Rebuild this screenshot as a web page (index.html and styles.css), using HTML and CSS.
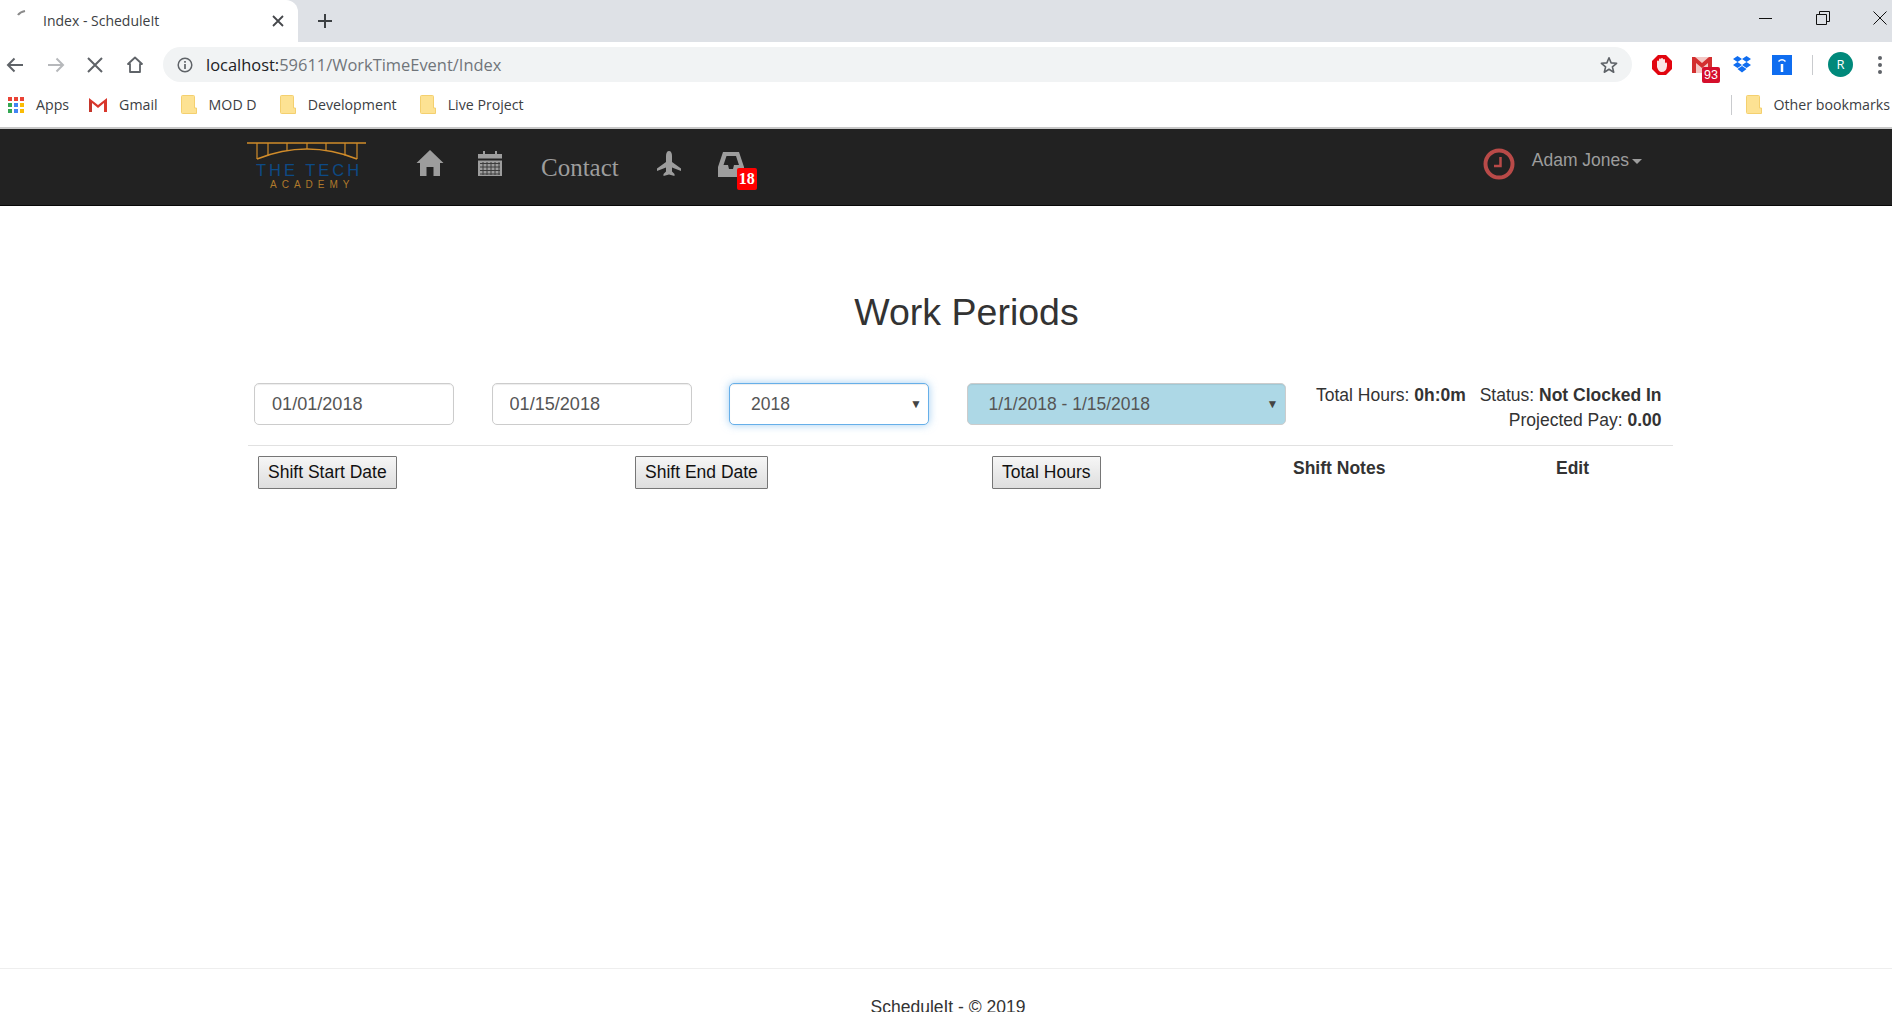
FILE: index.html
```html
<!DOCTYPE html>
<html lang="en">
<head>
<meta charset="utf-8">
<title>Index - ScheduleIt</title>
<link rel="stylesheet" href="styles.css">
</head>
<body>
<div class="tabstrip">
  <div class="tab">
    <svg class="spinner" width="12" height="8" viewBox="0 0 12 8"><path d="M2 6Q4 3 9 2" fill="none" stroke="#8a8a8a" stroke-width="2.2"/></svg>
    <span class="tab-title">Index - ScheduleIt</span>
    <svg class="tab-close" width="12" height="12" viewBox="0 0 12 12"><path d="M1 1L11 11M11 1L1 11" stroke="#45474b" stroke-width="1.8"/></svg>
  </div>
  <svg class="newtab" width="16" height="16" viewBox="0 0 16 16"><path d="M8 1V15M1 8H15" stroke="#3c4043" stroke-width="2"/></svg>
  <div class="winctl">
    <svg width="14" height="14" viewBox="0 0 14 14"><path d="M0 7.5H13" stroke="#111" stroke-width="1"/></svg>
    <svg width="14" height="14" viewBox="0 0 14 14"><path d="M.5 3.5H10.5V13.5H.5ZM3.5 3V.5H13.500V10.500H11" fill="none" stroke="#111" stroke-width="1"/></svg>
    <svg width="14" height="14" viewBox="0 0 14 14"><path d="M.5 .5L13.500 13.500M13.500 .5L.5 13.500" stroke="#111" stroke-width="1"/></svg>
  </div>
</div>
<div class="toolbar">
  <svg class="tb-back" width="18" height="16" viewBox="0 0 18 16"><path d="M17 8H2M8.500 1.500L2 8L8.500 14.500" fill="none" stroke="#5f6368" stroke-width="2"/></svg>
  <svg class="tb-fwd" width="18" height="16" viewBox="0 0 18 16"><path d="M1 8H16M9.500 1.500L16 8L9.500 14.500" fill="none" stroke="#b6b8bb" stroke-width="2"/></svg>
  <svg class="tb-stop" width="16" height="16" viewBox="0 0 16 16"><path d="M1 1L15 15M15 1L1 15" stroke="#5f6368" stroke-width="2"/></svg>
  <svg class="tb-home" width="16" height="17" viewBox="0 0 16 17"><path d="M8 1.500L15 8H13V16H3V8H1Z" fill="none" stroke="#5f6368" stroke-width="1.800" stroke-linejoin="round"/></svg>
  <div class="omnibox">
    <svg class="omni-info" width="16" height="16" viewBox="0 0 16 16"><circle cx="8" cy="8" r="6.800" fill="none" stroke="#5f6368" stroke-width="1.500"/><path d="M8 7V12M8 4V5.800" stroke="#5f6368" stroke-width="1.700"/></svg>
    <span class="url"><span class="url-host">localhost:</span>59611/WorkTimeEvent/Index</span>
    <svg class="omni-star" width="18" height="18" viewBox="0 0 18 18"><path d="M9 1.800L11.100 6.900L16.600 7.300L12.400 10.900L13.700 16.200L9 13.300L4.300 16.200L5.600 10.900L1.400 7.300L6.900 6.900Z" fill="none" stroke="#5f6368" stroke-width="1.600" stroke-linejoin="round"/></svg>
  </div>
  <div class="extensions">
    <svg width="20" height="20" viewBox="0 0 20 20"><path d="M6 0H14L20 6V14L14 20H6L0 14V6Z" fill="#e2050f"/><path d="M5 9.500V6.500A1 1 0 0 1 7 6.500V4.500A1 1 0 0 1 9 4.500V4A1 1 0 0 1 11 4V5A1 1 0 0 1 13 5V8.500A1 1 0 0 1 15 8.500V11Q14.500 17 9.500 17Q6.500 17 5 12Z" fill="#fbe4e4"/></svg>
    <div class="ext-gmail">
      <svg width="20" height="16" viewBox="0 0 20 16"><path d="M0 0H20V16H0Z" fill="#f3c9c6"/><path d="M0 0H3L10 6L17 0H20V16H16V6L10 11L4 6V16H0Z" fill="#d32f2f"/></svg>
      <span class="ext-badge">93</span>
    </div>
    <svg class="ext-dropbox" width="18" height="17" viewBox="0 0 18 17"><path d="M4.500 0L9 3L4.500 6L0 3ZM13.500 0L18 3L13.500 6L9 3ZM0 9L4.500 6L9 9L4.500 12ZM18 9L13.500 6L9 9L13.500 12ZM4.500 13L9 10L13.500 13L9 16.500Z" fill="#0f6df0"/></svg>
    <div class="ext-info"><svg width="20" height="20" viewBox="0 0 20 20"><path d="M6.500 6.500Q10 3 13.500 6.500" fill="none" stroke="#fff" stroke-width="1.500"/><path d="M10 9V17" stroke="#fff" stroke-width="2.500"/></svg></div>
    <span class="ext-divider"></span>
    <span class="avatar">R</span>
    <svg class="menu-dots" width="4" height="18" viewBox="0 0 4 18"><circle cx="2" cy="2" r="2" fill="#5f6368"/><circle cx="2" cy="9" r="2" fill="#5f6368"/><circle cx="2" cy="16" r="2" fill="#5f6368"/></svg>
  </div>
</div>
<div class="bookmarks">
  <svg class="bm-apps" width="16" height="16" viewBox="0 0 16 16"><g><rect width="4" height="4" fill="#ea4335"/><rect x="6" width="4" height="4" fill="#ea4335"/><rect x="12" width="4" height="4" fill="#ea4335"/><rect y="6" width="4" height="4" fill="#34a853"/><rect x="6" y="6" width="4" height="4" fill="#4285f4"/><rect x="12" y="6" width="4" height="4" fill="#fbbc05"/><rect y="12" width="4" height="4" fill="#34a853"/><rect x="6" y="12" width="4" height="4" fill="#4285f4"/><rect x="12" y="12" width="4" height="4" fill="#fbbc05"/></g></svg>
  <span class="bm-label bm-first">Apps</span>
  <svg class="bm-gmail" width="18" height="14" viewBox="0 0 18 14"><path d="M0 0L9 7L18 0V14H15V5L9 10L3 5V14H0Z" fill="#d9372c"/><path d="M3 5V14H0V2Z" fill="#c4362b"/></svg>
  <span class="bm-label">Gmail</span>
  <svg class="bm-folder" width="16" height="19" viewBox="0 0 16 19"><path class="folder-shape" d="M1.500 .5H12.500Q13.500 .5 13.500 1.500V13H15.500V18.500H1.500Q.5 18.500 .5 17.500V1.500Q.5 .5 1.500 .5Z"/></svg>
  <span class="bm-label">MOD D</span>
  <svg class="bm-folder" width="16" height="19" viewBox="0 0 16 19"><path class="folder-shape" d="M1.500 .5H12.500Q13.500 .5 13.500 1.500V13H15.500V18.500H1.500Q.5 18.500 .5 17.500V1.500Q.5 .5 1.500 .5Z"/></svg>
  <span class="bm-label">Development</span>
  <svg class="bm-folder" width="16" height="19" viewBox="0 0 16 19"><path class="folder-shape" d="M1.500 .5H12.500Q13.500 .5 13.500 1.500V13H15.500V18.500H1.500Q.5 18.500 .5 17.500V1.500Q.5 .5 1.500 .5Z"/></svg>
  <span class="bm-label">Live Project</span>
  <span class="bm-divider"></span>
  <svg class="bm-folder bm-other" width="16" height="19" viewBox="0 0 16 19"><path class="folder-shape" d="M1.500 .5H12.500Q13.500 .5 13.500 1.500V13H15.500V18.500H1.500Q.5 18.500 .5 17.500V1.500Q.5 .5 1.500 .5Z"/></svg>
  <span class="bm-label">Other bookmarks</span>
</div>
<nav class="navbar">
  <svg class="logo" width="120" height="46" viewBox="0 0 120 46">
    <g fill="none" stroke="#d18c2a">
      <path d="M0 1H119" stroke-width="1.500"/>
      <path d="M10 1V17M21 1V13.500M40 1V9M60 1V7M79 1V9M98 1V13.500M110 1V17" stroke-width="1.200"/>
      <path d="M10 17Q60 -3 110 17" stroke-width="1.500"/>
    </g>
    <text class="logo-main" x="9" y="33.500">THE TECH</text>
    <text class="logo-sub" x="23" y="45.500">ACADEMY</text>
  </svg>
  <a class="nav-icon nav-home" href="#"><svg width="28" height="26" viewBox="0 0 28 26"><path d="M14 0L27.500 13H24V26H17.500V17H10.500V26H4V13H.5Z" fill="#9d9d9d"/></svg></a>
  <a class="nav-icon nav-cal" href="#"><svg width="24" height="25" viewBox="0 0 24 25"><path d="M5 0H7V3H17V0H19V3H24V7.500H0V3H5Z" fill="#9d9d9d"/><path d="M0 9.500H24V25H0Z" fill="#9d9d9d"/><path d="M2 12.500H22M2 16H22M2 19.500H22M2 23H22M5 11V24M9 11V24M13 11V24M17 11V24M21 11V24" stroke="#3d3d3d" stroke-width="1"/></svg></a>
  <a class="nav-contact" href="#">Contact</a>
  <a class="nav-icon nav-plane" href="#"><svg width="24" height="25" viewBox="0 0 24 25"><path d="M12 0C14 0 15 2 15 5V11L24 17.500V20L15 16.500V20.500L17.500 23V25L12 23.500L6.500 25V23L9 20.500V16.500L0 20V17.500L9 11V5C9 2 10 0 12 0Z" fill="#9d9d9d"/></svg></a>
  <a class="nav-icon nav-inbox" href="#">
    <svg width="26" height="25" viewBox="0 0 26 25"><path fill-rule="evenodd" d="M5 0H21L26 15V25H0V15ZM8.500 4L5.500 13H10L11 17H15L16 13H21L18 4Z" fill="#9d9d9d"/></svg>
    <span class="nav-badge">18</span>
  </a>
  <svg class="clock" width="32" height="32" viewBox="0 0 32 32"><circle cx="16" cy="16" r="13.500" fill="none" stroke="#b94a48" stroke-width="4"/><path d="M17.500 9V18H11" fill="none" stroke="#b94a48" stroke-width="2.500"/></svg>
  <a class="nav-user" href="#">Adam Jones<span class="caret"></span></a>
</nav>
<main class="content">
  <h1 class="title">Work Periods</h1>
  <div class="filters">
    <input class="field field-date" type="text" value="01/01/2018">
    <input class="field field-date" type="text" value="01/15/2018">
    <div class="select-wrap">
      <select class="field field-focus"><option>2018</option></select>
    </div>
    <div class="select-wrap select-wide">
      <select class="field field-period"><option>1/1/2018 - 1/15/2018</option></select>
    </div>
    <div class="summary">
      <div>Total Hours: <b>0h:0m</b> <span class="status">Status: <b>Not Clocked In</b></span></div>
      <div>Projected Pay: <b>0.00</b></div>
    </div>
  </div>
  <div class="table-head">
    <div><button class="sort-btn" type="button">Shift Start Date</button></div>
    <div><button class="sort-btn" type="button">Shift End Date</button></div>
    <div><button class="sort-btn" type="button">Total Hours</button></div>
    <div class="th-label">Shift Notes</div>
    <div class="th-label">Edit</div>
  </div>
</main>
<footer class="footer">ScheduleIt - © 2019</footer>
</body>
</html>
```

FILE: styles.css
```css
* { box-sizing: border-box; }
html, body { margin: 0; height: 100%; }
body {
  display: flex;
  flex-direction: column;
  height: 1012px;
  overflow: hidden;
  background: #fff;
  color: #333;
  font-family: "Liberation Sans", Arial, sans-serif;
  font-size: 17.5px;
  line-height: 25px;
}
a { text-decoration: none; }
b { font-weight: 700; }

/* browser chrome */
.tabstrip {
  display: flex;
  align-items: flex-start;
  flex: none;
  height: 42px;
  background: #dee1e6;
}
.tab {
  display: flex;
  align-items: center;
  width: 298px;
  height: 42px;
  padding-left: 16px;
  background: #fff;
  border-radius: 0 12px 0 0;
}
.spinner { margin: -16px 0 0 0; }
.tab-title {
  margin: -2px 0 0 15px;
  font: 14px "Open Sans", sans-serif;
  color: #3c4043;
}
.tab-close { margin-left: auto; margin-right: 14px; }
.newtab { margin: 13px 0 0 19px; }
.winctl { display: flex; gap: 43px; margin: 11px 5px 0 auto; }
.toolbar {
  display: flex;
  align-items: center;
  flex: none;
  height: 46px;
  padding-bottom: 1px;
  background: #fff;
}
.tb-back { margin-left: 6px; }
.tb-fwd { margin-left: 23px; }
.tb-stop { margin-left: 22px; }
.tb-home { margin-left: 24px; }
.omnibox {
  display: flex;
  align-items: center;
  width: 1469px;
  height: 35px;
  margin-left: 20px;
  padding: 0 14px;
  background: #f1f3f4;
  border-radius: 18px;
}
.url {
  margin-left: 13px;
  font: 16.450px "Open Sans", sans-serif;
  color: #70757a;
}
.url-host { color: #202124; }
.omni-star { margin-left: auto; }
.extensions { display: flex; align-items: center; margin-left: 20px; }
.ext-gmail { position: relative; width: 20px; height: 16px; margin-left: 20px; }
.ext-gmail svg { display: block; }
.ext-badge {
  position: absolute;
  left: 10px;
  top: 10px;
  width: 18px;
  height: 16px;
  background: #d50f2c;
  border-radius: 2px;
  color: #fff;
  font: 12.500px/16px "Liberation Sans", sans-serif;
  text-align: center;
}
.ext-dropbox { margin-left: 21px; }
.ext-info { width: 20px; height: 20px; margin-left: 21px; background: #0f6df0; }
.ext-info svg { display: block; }
.ext-divider { width: 1px; height: 20px; margin-left: 20px; background: #c9cbce; }
.avatar {
  width: 25px;
  height: 25px;
  margin-left: 15px;
  background: #00897b;
  border-radius: 50%;
  color: #fff;
  font: 13px/25px "Open Sans", sans-serif;
  text-align: center;
}
.menu-dots { margin-left: 25px; }
.bookmarks {
  display: flex;
  align-items: center;
  flex: none;
  height: 41px;
  padding: 0 2px 6px 8px;
  background: #fff;
  border-bottom: 2px solid #c8c8c8;
}
.bm-label { margin-left: 12px; font: 14.200px "Open Sans", sans-serif; color: #3c4043; white-space: nowrap; }
.bm-first { margin-left: 12px; }
.bm-gmail { margin-left: 20px; }
.bm-folder { margin-left: 23px; }
.folder-shape { fill: #fde293; stroke: #f4d06f; stroke-width: 1; }
.bm-divider { width: 1px; height: 20px; margin-left: auto; background: #c9cbce; }
.bm-folder.bm-other { margin-left: 14px; }

/* site navbar */
.navbar {
  position: relative;
  display: flex;
  align-items: flex-start;
  flex: none;
  height: 77px;
  padding: 13px 0 0 247px;
  background: #222;
  border-bottom: 1px solid #080808;
}
.logo { flex: none; }
.logo-main {
  fill: #0d4a85;
  font: 16.500px "Liberation Sans", sans-serif;
  letter-spacing: 3px;
}
.logo-sub {
  fill: #b07a2c;
  font: 10px "Liberation Sans", sans-serif;
  letter-spacing: 5px;
}
.nav-icon { display: block; }
.nav-icon svg { display: block; }
.nav-home { margin: 8px 0 0 49px; }
.nav-cal { margin: 9px 0 0 34px; }
.nav-contact {
  margin: 10px 0 0 39px;
  color: #9d9d9d;
  font: 25px/32px "Liberation Serif", serif;
}
.nav-plane { margin: 9px 0 0 38px; }
.nav-inbox { position: relative; margin: 10px 0 0 37px; }
.nav-badge {
  position: absolute;
  left: 19px;
  top: 16px;
  width: 20px;
  height: 22px;
  background: #f00;
  border-radius: 2px;
  color: #fff;
  font: 700 16px/22px "Liberation Serif", serif;
  text-align: center;
}
.clock { margin: 6px 0 0 739px; }
.nav-user { margin: 6px 0 0 17px; color: #9d9d9d; white-space: nowrap; }
.caret {
  display: inline-block;
  margin-left: 3px;
  vertical-align: middle;
  border-top: 5px solid #9d9d9d;
  border-left: 5px solid transparent;
  border-right: 5px solid transparent;
}

/* page content */
.content { flex: 1; padding: 0 219px 0 248px; }
.title {
  margin: 86px 0 0;
  padding-left: 12px;
  font-size: 37.500px;
  font-weight: 400;
  line-height: 41px;
  text-align: center;
  color: #333;
}
.filters {
  display: flex;
  align-items: flex-start;
  gap: 37.500px;
  height: 63px;
  margin-top: 50px;
  padding-left: 6px;
  border-bottom: 1px solid #e1e1e1;
}
.field {
  display: block;
  width: 200px;
  height: 42px;
  padding: 0 17px;
  background: #fff;
  border: 1px solid #ccc;
  border-radius: 5px;
  box-shadow: inset 0 1px 1px rgba(0,0,0,.075);
  color: #555;
  font: 17.500px "Liberation Sans", sans-serif;
  outline: 0;
}
.field-date { font-size: 18.100px; }
.select-wrap { position: relative; }
.select-wrap::after {
  content: "▼";
  position: absolute;
  right: 7px;
  top: 9px;
  color: #444;
  font-size: 12px;
  line-height: 24px;
  pointer-events: none;
}
.field-focus, .field-period { appearance: none; padding-left: 21px; }
.field-focus {
  border-color: #66afe9;
  box-shadow: inset 0 1px 1px rgba(0,0,0,.075), 0 0 8px rgba(102,175,233,.6);
}
.select-wide { width: 319px; }
.field-period { width: 319px; background: #add8e6; }
.summary { flex: 1; margin: 0 0 0 -7px; padding-right: 16px; text-align: right; white-space: nowrap; }
.status { margin-left: 9px; }
.table-head {
  display: grid;
  grid-template-columns: 377px 357px 301px 263px auto;
  padding: 10px 0 0 10px;
}
.th-label { margin-top: 0; font-weight: 700; }
.sort-btn {
  height: 33px;
  padding: 0 9px;
  background: linear-gradient(#f6f6f6, #dedede);
  border: 1px solid #767676;
  border-radius: 1px;
  color: #111;
  font: 17.500px "Liberation Sans", sans-serif;
}
.footer {
  flex: none;
  height: 44px;
  padding: 26px 0 0 4px;
  border-top: 1px solid #eee;
  text-align: center;
  overflow: hidden;
}
```
